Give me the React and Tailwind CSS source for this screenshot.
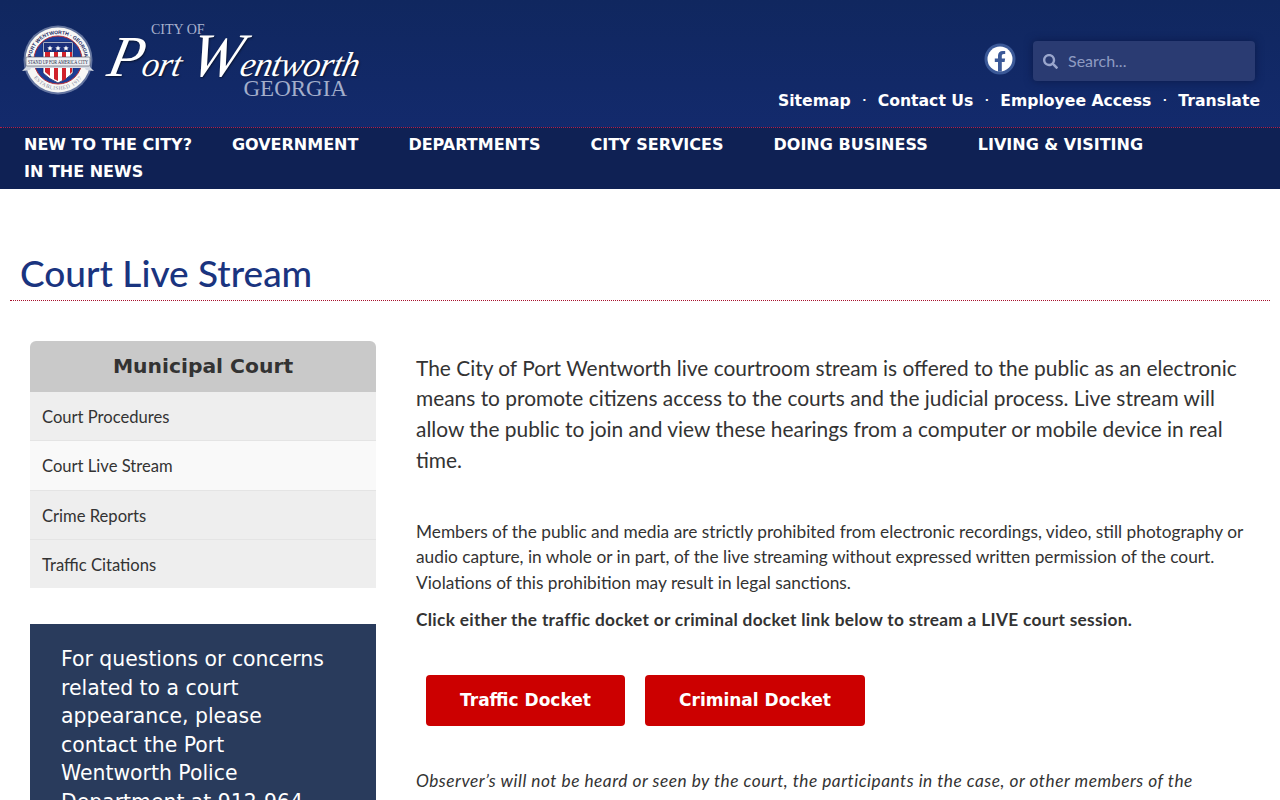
import React from 'react';
import { FaSearch } from 'react-icons/fa';

const dejavu = 'font-["DejaVu_Sans",sans-serif]';

const navItems = [
  { label: 'NEW TO THE CITY?', cls: 'mr-10' },
  { label: 'GOVERNMENT', cls: 'mr-[50px]' },
  { label: 'DEPARTMENTS', cls: 'mr-[50px]' },
  { label: 'CITY SERVICES', cls: 'mr-[50px]' },
  { label: 'DOING BUSINESS', cls: 'mr-[50px]' },
  { label: 'LIVING & VISITING', cls: 'mr-[50px]' },
  { label: 'IN THE NEWS', cls: 'mr-[50px]' },
];

const sideLinks = [
  { label: 'Court Procedures', bg: 'bg-[#eeeeee]', h: 'h-[49px] pt-[3px]' },
  { label: 'Court Live Stream', bg: 'bg-[#f9f9f9]', h: 'h-[50px] pt-[2px]' },
  { label: 'Crime Reports', bg: 'bg-[#eeeeee]', h: 'h-[49px] pt-[3px]' },
  { label: 'Traffic Citations', bg: 'bg-[#eeeeee]', h: 'h-[48px] pt-[3px]' },
];

const Seal = () => (
  <svg width="74" height="70" viewBox="0 0 74 70" className="shrink-0">
    <defs>
      <path id="sealTop" d="M10 36a27 27 0 0 1 54 0" />
      <path id="sealBottom" d="M8.100 43A30 30 0 0 0 65.900 43" />
    </defs>
    <circle cx="37" cy="35" r="34.500" fill="#dfe6f4" opacity=".4" />
    <circle cx="37" cy="35" r="32.500" fill="#f7f7f5" />
    <circle cx="37" cy="35" r="24" fill="#1c3c94" stroke="#b8303a" strokeWidth="1" />
    <text fontSize="5" fontWeight="700" fill="#1a2a62" fontFamily="Liberation Sans, sans-serif">
      <textPath href="#sealTop" startOffset="50%" textAnchor="middle">PORT WENTWORTH · GEORGIA</textPath>
    </text>
    <text fontSize="5.400" fill="#7f889c" letterSpacing=".5" fontFamily="Liberation Serif, serif">
      <textPath href="#sealBottom" startOffset="50%" textAnchor="middle">ESTABLISHED 1917</textPath>
    </text>
    {/* shield */}
    <path d="M22 17h30v31q-6 6-15 10q-9-4-15-10z" fill="#fff" stroke="#1a2a62" strokeWidth=".8" />
    <path d="M23 18h28v9H23z" fill="#1b2f7a" />
    <path d="M24 27h5v24l-5-4zM33 27h4v29l-4-2zM41 27h4v27l-4 2zM49 27h2v20l-2 2z" fill="#d0222c" />
    <path d="M29 20.500l.8 1.700 1.900.2-1.400 1.300.4 1.900-1.700-1-1.700 1 .4-1.900-1.400-1.300 1.900-.2zM37 20.500l.8 1.700 1.900.2-1.400 1.300.4 1.900-1.700-1-1.700 1 .4-1.900-1.400-1.300 1.900-.2zM45 20.500l.8 1.700 1.900.2-1.400 1.300.4 1.900-1.700-1-1.700 1 .4-1.900-1.400-1.300 1.900-.2z" fill="#fff" />
    {/* banner */}
    <path d="M1 46l5-5-1-4 4 2h56l4-2-1 4 5 5-8-1-1-2H10l-1 2z" fill="#d5dae3" />
    <rect x="5" y="32" width="64" height="9" rx="1" fill="#eef0f3" stroke="#4a4f60" strokeWidth=".6" />
    <text x="37" y="38.800" fontSize="6" fill="#222a48" textAnchor="middle" textLength="60" lengthAdjust="spacingAndGlyphs" fontFamily="Liberation Serif, serif">STAND UP FOR AMERICA CITY</text>
  </svg>
);

const Facebook = () => (
  <svg width="32" height="32" viewBox="0 0 32 32" className="shrink-0">
    <circle cx="16" cy="16" r="15.5" fill="#3b5998" />
    <circle cx="16" cy="16" r="12.500" fill="#fff" />
    <path d="M14 28.400v-9.400h-3.200v-3.600H14v-2.700c0-3.100 1.900-4.800 4.700-4.800 1.300 0 2.500.2 2.500.2v3h-1.400c-1.500 0-2 .9-2 1.900v2.400h3.300l-.5 3.600h-2.800v9.400z" fill="#3b5998" />
  </svg>
);

const Dot = () => <span className="w-[27px] text-center text-white text-[11px]">·</span>;

export default function App() {
  return (
    <div className="h-[800px] overflow-hidden bg-white font-['Lato',sans-serif] text-[#333333]">
      {/* Header */}
      <header className="flex justify-between h-[127px] bg-gradient-to-b from-[#10275f] to-[#132a6c]">
        <div className="flex items-start pl-[21px] pt-[25px]">
          <Seal />
          <div className="ml-[15px] w-[254px] font-['Liberation_Serif',serif]">
            <div className="h-[5px] ml-[41px] text-[14px] leading-[10px] text-[#a9b3cf]">CITY OF</div>
            <div className="h-[49px] -skew-x-12 whitespace-nowrap font-light italic leading-[50px] text-white tracking-[-0.5px] [text-shadow:1px_1px_2px_#0008]">
              <span className="text-[58px]">P</span>
              <span className="text-[34.5px]">ort </span>
              <span className="text-[62px]">W</span>
              <span className="text-[34.5px]">entworth</span>
            </div>
            <div className="pr-[17px] text-right text-[23px] leading-[20px] text-[#a3aecb]">GEORGIA</div>
          </div>
        </div>
        <div className="flex flex-col items-end pr-5 pt-[41px]">
          <div className="flex items-center gap-[17px] mr-[5px]">
            <div className="-mt-1"><Facebook /></div>
            <div className="flex items-center w-[222px] h-10 rounded bg-[#2a3b72] shadow-[0_0_8px_#0b1a4a] pl-[10px]">
              <FaSearch size={15} className="text-[#9aa6cc]" />
              <span className="ml-[10px] text-[16px] text-[#8f9bc2]">Search...</span>
            </div>
          </div>
          <div className={`mt-[10px] flex items-center text-white font-bold text-[15.65px] leading-5 ${dejavu}`}>
            <span>Sitemap</span>
            <Dot />
            <span>Contact Us</span>
            <Dot />
            <span>Employee Access</span>
            <Dot />
            <span>Translate</span>
          </div>
        </div>
      </header>

      {/* Nav */}
      <nav className="border-t border-dotted border-[#b0204a] bg-[#0f2154] h-[62px] pl-6 pt-[3px]">
        <ul className={`flex flex-wrap text-white font-bold text-[16px] leading-[27px] ${dejavu}`}>
          {navItems.map((item) => (
            <li key={item.label} className={item.cls}>{item.label}</li>
          ))}
        </ul>
      </nav>

      {/* Title */}
      <div className="mx-[10px] mt-[63px] h-[49px] border-b border-dotted border-[#a8102c] px-[10px]">
        <h1 className="text-[37px] leading-[42px] font-medium text-[#1a347f]">Court Live Stream</h1>
      </div>

      <main className="flex pl-[30px] pt-10 pr-[30px]">
        {/* Sidebar */}
        <aside className="w-[346px] shrink-0">
          <h2 className={`h-[51px] pb-[1px] flex items-center justify-center rounded-t-md bg-[#c9c9c9] text-[20.3px] font-bold text-[#333333] ${dejavu}`}>
            Municipal Court
          </h2>
          <ul>
            {sideLinks.map((link) => (
              <li key={link.label} className={`${link.h} ${link.bg} flex items-center pl-3 text-[16.6px] text-[#333333] border-b border-[#e4e4e4] last:border-b-0`}>
                {link.label}
              </li>
            ))}
          </ul>
          <div className={`mt-9 bg-[#293b5c] pl-[31px] pr-[40px] pt-[21px] pb-8 text-white text-[20.4px] leading-[28.500px] ${dejavu}`}>
            For questions or concerns related to a court appearance, please contact the Port Wentworth Police Department at 912-964-4303.
          </div>
        </aside>

        {/* Content */}
        <section className="ml-10 flex-1">
          <p className="pt-[11.6px] text-[20.9px] leading-[30.800px] text-[#333333]">
            The City of Port Wentworth live courtroom stream is offered to the public as an electronic means to promote citizens access to the courts and the judicial process. Live stream will allow the public to join and view these hearings from a computer or mobile device in real time.
          </p>
          <p className="mt-[42px] pt-[1px] text-[17.300px] leading-[25.500px]">
            Members of the public and media are strictly prohibited from electronic recordings, video, still photography or audio capture, in whole or in part, of the live streaming without expressed written permission of the court. Violations of this prohibition may result in legal sanctions.
          </p>
          <p className="mt-[12px] text-[17.300px] leading-[25.500px] font-bold tracking-[0.3px]">
            Click either the traffic docket or criminal docket link below to stream a LIVE court session.
          </p>
          <div className={`mt-[42px] ml-[10px] flex gap-5 text-white font-bold text-[17px] ${dejavu}`}>
            <a className="flex items-center justify-center w-[199px] h-[51px] rounded bg-[#cc0000]">Traffic Docket</a>
            <a className="flex items-center justify-center w-[220px] h-[51px] rounded bg-[#cc0000]">Criminal Docket</a>
          </div>
          <p className="mt-[41px] max-w-[810px] text-[17.300px] leading-[28px] italic tracking-[0.5px]">
            Observer’s will not be heard or seen by the court, the participants in the case, or other members of the public.
          </p>
        </section>
      </main>
    </div>
  );
}
